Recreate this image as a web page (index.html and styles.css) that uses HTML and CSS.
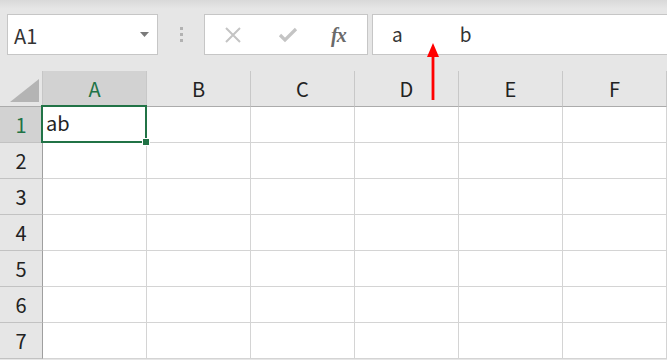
FILE: index.html
```html
<!DOCTYPE html>
<html>
<head>
<meta charset="utf-8">
<link rel="stylesheet" href="styles.css">
</head>
<body>
<div class="app">
  <div class="toolbar">
    <div class="namebox">
      <span class="name">A1</span>
      <svg class="caret" width="9" height="5" viewBox="0 0 9 5"><path d="M0 0h9L4.5 5z" fill="#7a7a7a"/></svg>
    </div>
    <div class="grip"><i></i><i></i><i></i></div>
    <div class="fbuttons">
      <svg class="btn" width="18" height="18" viewBox="0 0 18 18"><path d="M2 2L16 16M16 2L2 16" stroke="#c4c4c4" stroke-width="2" fill="none"/></svg>
      <svg class="btn" width="20" height="18" viewBox="0 0 20 18"><path d="M2 9l5 5L18 3" stroke="#c4c4c4" stroke-width="3.2" fill="none"/></svg>
      <span class="fx">fx</span>
    </div>
    <div class="formula">
      <span class="ftext">a</span><span class="ftext fb">b</span>
    </div>
  </div>
  <div class="sheet">
    <div class="corner"><svg width="29" height="23" viewBox="0 0 29 23"><path d="M29 0V23H0z" fill="#b4b4b4"/></svg></div>
    <div class="ch sel">A</div>
    <div class="ch">B</div>
    <div class="ch">C</div>
    <div class="ch">D</div>
    <div class="ch">E</div>
    <div class="ch last">F</div>

    <div class="rh sel">1</div>
    <div class="cell active"><span class="val">ab</span><span class="handle"></span></div>
    <div class="cell"></div><div class="cell"></div><div class="cell"></div><div class="cell"></div><div class="cell"></div>

    <div class="rh">2</div>
    <div class="cell"></div><div class="cell"></div><div class="cell"></div><div class="cell"></div><div class="cell"></div><div class="cell"></div>
    <div class="rh">3</div>
    <div class="cell"></div><div class="cell"></div><div class="cell"></div><div class="cell"></div><div class="cell"></div><div class="cell"></div>
    <div class="rh">4</div>
    <div class="cell"></div><div class="cell"></div><div class="cell"></div><div class="cell"></div><div class="cell"></div><div class="cell"></div>
    <div class="rh">5</div>
    <div class="cell"></div><div class="cell"></div><div class="cell"></div><div class="cell"></div><div class="cell"></div><div class="cell"></div>
    <div class="rh">6</div>
    <div class="cell"></div><div class="cell"></div><div class="cell"></div><div class="cell"></div><div class="cell"></div><div class="cell"></div>
    <div class="rh">7</div>
    <div class="cell"></div><div class="cell"></div><div class="cell"></div><div class="cell"></div><div class="cell"></div><div class="cell"></div>
  </div>
  <svg class="arrow" width="14" height="58" viewBox="0 0 14 58"><path d="M7 0L13 14H8.4V57H5.6V14H1z" fill="#ff0000"/></svg>
</div>
</body>
</html>
```
FILE: styles.css
```css
html, body {
  margin: 0;
  padding: 0;
  background: #e6e6e6;
  overflow: hidden;
}
.app {
  position: relative;
  width: 667px;
  height: 360px;
  font-family: "Noto Sans CJK JP", "Noto Sans", sans-serif;
  color: #222;
}
.toolbar {
  height: 71px;
  box-sizing: border-box;
  padding: 14px 0 0 7px;
  display: flex;
  align-items: flex-start;
  background: linear-gradient(#d9d9d9 0px, #e6e6e6 9px, #e6e6e6 100%);
}
.namebox {
  width: 151px;
  height: 41px;
  box-sizing: border-box;
  background: #fff;
  border: 1px solid #c6c6c6;
  display: flex;
  align-items: center;
  padding: 0 8px 0 6px;
}
.name {
  flex: 1;
  font-size: 20px;
  color: #333;
  line-height: 1;
  padding-top: 2px;
}
.caret { display: block; }
.grip {
  width: 46px;
  height: 41px;
  display: flex;
  flex-direction: column;
  align-items: center;
  justify-content: center;
  gap: 3px;
}
.grip i {
  width: 3px;
  height: 3px;
  background: #b2b2b2;
}
.fbuttons {
  width: 164px;
  height: 41px;
  box-sizing: border-box;
  background: #fff;
  border: 1px solid #c6c6c6;
  display: flex;
  align-items: center;
  padding-left: 19px;
}
.fbuttons .btn { display: block; }
.fbuttons .btn:nth-child(2) { margin-left: 36px; }
.fx {
  margin-left: 33px;
  font-family: "Liberation Serif", serif;
  font-style: italic;
  font-weight: bold;
  font-size: 20px;
  color: #6a6a6a;
  line-height: 1;
  letter-spacing: -1px;
}
.formula {
  margin-left: 4px;
  flex: 1;
  height: 41px;
  box-sizing: border-box;
  background: #fff;
  border: 1px solid #c6c6c6;
  border-right: none;
  display: flex;
  align-items: center;
  padding-left: 19px;
}
.ftext {
  font-size: 19px;
  color: #333;
  line-height: 1;
  padding-bottom: 2px;
}
.fb { margin-left: 57px; }
.sheet {
  display: grid;
  grid-template-columns: 43px repeat(6, 104px);
  grid-template-rows: 36px repeat(7, 36px);
  background: #fff;
}
.corner {
  background: #e6e6e6;
  border-right: 1px solid #c6c6c6;
  border-bottom: 1px solid #ababab;
  display: flex;
  align-items: flex-end;
  justify-content: flex-end;
  padding: 0 3px 4px 0;
  box-sizing: border-box;
}
.corner svg { display: block; }
.ch {
  background: #e6e6e6;
  border-bottom: 1px solid #ababab;
  border-right: 1px solid #c8c8c8;
  box-sizing: border-box;
  display: flex;
  align-items: center;
  justify-content: center;
  font-size: 20px;
  line-height: 1;
  color: #222;
  padding-top: 1px;
}
.ch.sel {
  background: #d2d2d2;
  color: #217346;
}
.rh {
  background: #e6e6e6;
  border-right: 1px solid #9f9f9f;
  border-bottom: 1px solid #c2c2c2;
  box-sizing: border-box;
  display: flex;
  align-items: center;
  justify-content: center;
  font-size: 20px;
  line-height: 1;
  color: #222;
}
.rh.sel {
  background: #d2d2d2;
  color: #217346;
}
.cell {
  border-right: 1px solid #d4d4d4;
  border-bottom: 1px solid #d4d4d4;
  box-sizing: border-box;
  position: relative;
}
.cell.active::after {
  content: "";
  position: absolute;
  left: -2px;
  top: -2px;
  right: -1px;
  bottom: -1px;
  border: 2px solid #217346;
}
.val {
  position: absolute;
  left: 3px;
  top: 6px;
  font-size: 20px;
  line-height: 1;
  color: #222;
}
.handle {
  position: absolute;
  right: -4px;
  bottom: -4px;
  width: 6px;
  height: 6px;
  background: #217346;
  border: 1px solid #fff;
  z-index: 2;
}
.arrow {
  position: absolute;
  left: 426px;
  top: 43px;
}
```
